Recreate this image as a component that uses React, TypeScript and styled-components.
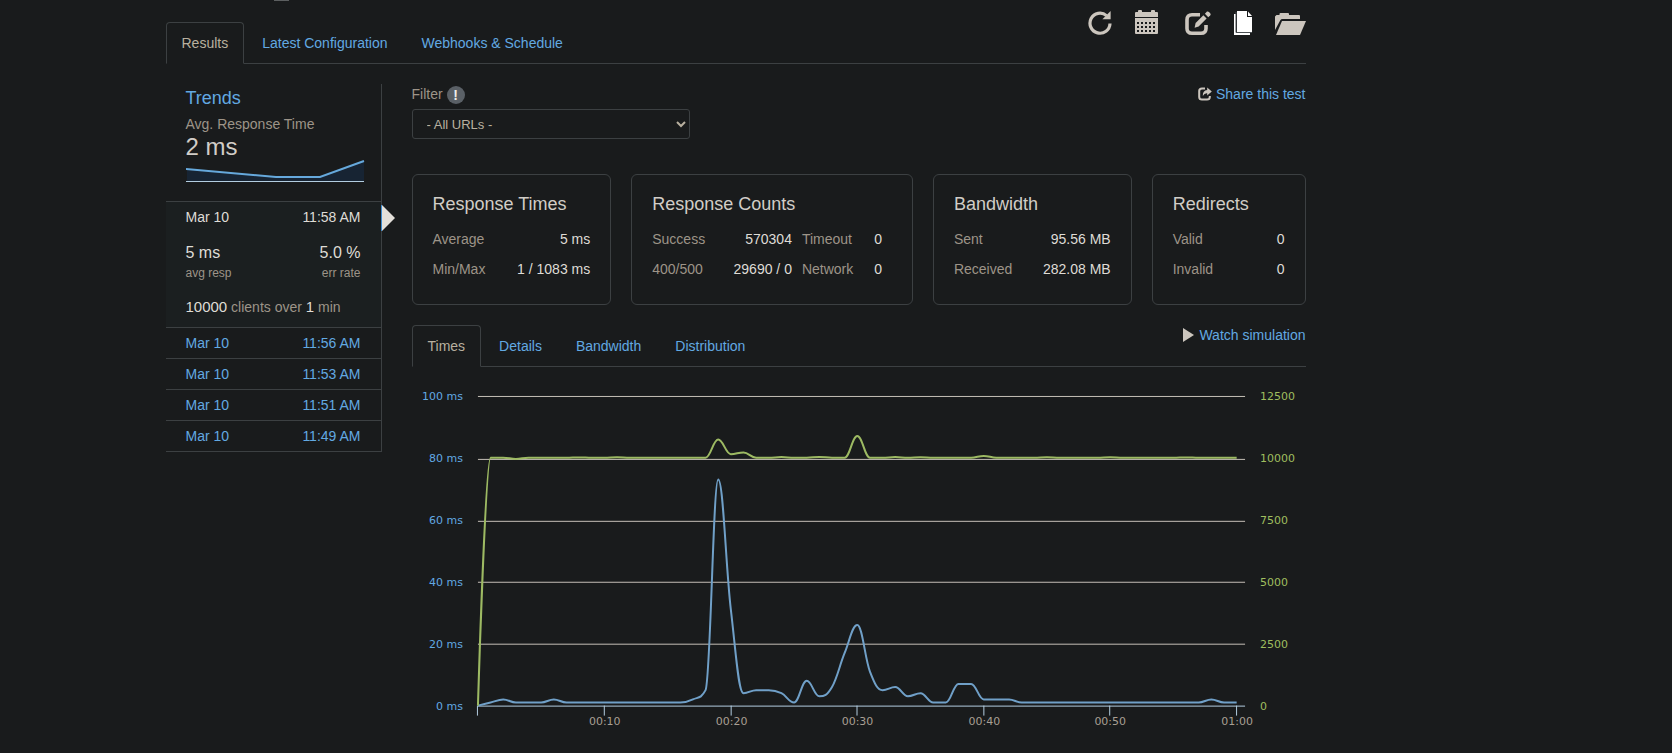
import React from "react";
import styled, { createGlobalStyle, css } from "styled-components";

const color = {
  page: "#191b1c",
  line: "#3c4042",
  text: "#d1cdc7",
  strong: "#dfdcd6",
  muted: "#9d9488",
  link: "#62a9e2",
  icon: "#ccc6be",
};

const GlobalStyle = createGlobalStyle`
  *, *::before, *::after { box-sizing: border-box; }
  body {
    margin: 0;
    background: ${color.page};
    color: ${color.text};
    font: 14px/20px "Liberation Sans", Arial, sans-serif;
  }
  h2, h3, p, ul, dl, dd { margin: 0; padding: 0; font-weight: 400; }
  ul { list-style: none; }
  a { color: ${color.link}; text-decoration: none; }
  button { font: inherit; }
`;

const Page = styled.div`
  padding-right: 201px;
`;

const Container = styled.div`
  max-width: 1170px;
  margin: 0 auto;
  padding: 0 15px;
`;

const HeadingRule = styled.div`
  width: 15px;
  height: 1px;
  margin-left: 108px;
  background: #5c5f60;
`;

const Header = styled.header`
  display: flex;
  justify-content: space-between;
  align-items: flex-start;
  padding-top: 9px;
  border-bottom: 1px solid ${color.line};
`;

const TabList = styled.nav`
  display: flex;
  gap: 2px;
  margin-bottom: -1px;
`;

const HeaderTabs = styled(TabList)`
  margin-top: 12px;
`;

const Tab = styled.a<{ $active?: boolean }>`
  padding: 10px 15px;
  border: 1px solid transparent;
  border-radius: 4px 4px 0 0;
  ${({ $active }) =>
    $active &&
    css`
      color: #b8b09f;
      background: ${color.page};
      border-color: ${color.line};
      border-bottom-color: ${color.page};
    `}
`;

const Toolbar = styled.div`
  display: flex;
  gap: 22px;
`;

const ToolButton = styled.button<{ $bright?: boolean }>`
  display: block;
  padding: 0;
  border: 0;
  background: none;
  color: ${({ $bright }) => ($bright ? "#ffffff" : color.icon)};
  cursor: pointer;
  svg { display: block; }
`;

const Columns = styled.div`
  display: flex;
  align-items: flex-start;
  gap: 30px;
  padding-top: 20px;
`;

const Sidebar = styled.aside`
  flex: 0 0 215px;
  border-right: 1px solid ${color.line};
`;

const Trends = styled.section`
  padding: 4px 16px 18px 20px;
  svg { display: block; }
`;

const TrendsTitle = styled.h2`
  font-size: 18px;
`;

const TrendLabel = styled.p`
  margin-top: 6px;
  color: ${color.muted};
`;

const TrendValue = styled.p`
  margin-top: 1px;
  font-size: 24px;
  line-height: 24px;
`;

const RunItem = styled.li`
  border-top: 1px solid ${color.line};
  &:last-child { border-bottom: 1px solid ${color.line}; }
`;

const RunLink = styled.a`
  display: flex;
  justify-content: space-between;
  padding: 5px 20px;
`;

const CurrentRun = styled(RunItem)`
  position: relative;
  padding: 5px 20px 10px;
  background: #1b1f20;
  color: ${color.strong};
`;

const Pointer = styled.svg`
  position: absolute;
  left: 100%;
  top: 2px;
`;

const Split = styled.div`
  display: flex;
  justify-content: space-between;
`;

const RunFigures = styled(Split)`
  margin: 16px 0 14px;
  font-size: 16px;
`;

const Figure = styled.div<{ $right?: boolean }>`
  text-align: ${({ $right }) => ($right ? "right" : "left")};
`;

const Caption = styled.div`
  font-size: 12px;
  color: ${color.muted};
`;

const RunClients = styled.p`
  color: ${color.muted};
  strong {
    font-size: 15px;
    font-weight: 400;
    color: ${color.strong};
  }
`;

const Main = styled.main`
  flex: 1;
  min-width: 0;
`;

const FilterRow = styled.div`
  display: flex;
  justify-content: space-between;
  align-items: flex-start;
`;

const FilterLabel = styled.label`
  display: flex;
  align-items: center;
  gap: 4px;
  margin-bottom: 5px;
  color: ${color.muted};
`;

const Hint = styled.span`
  width: 18px;
  height: 18px;
  margin-top: 2px;
  border-radius: 50%;
  background: #5a6066;
  color: #f0eee9;
  font-size: 14px;
  font-weight: 700;
  line-height: 18px;
  text-align: center;
`;

const Select = styled.select`
  display: block;
  width: 278px;
  height: 30px;
  padding: 5px 0 5px 10px;
  border: 1px solid ${color.line};
  border-radius: 3px;
  background: ${color.page};
  color: #b8b09f;
  font: 13px "Liberation Sans", Arial, sans-serif;
`;

const IconLink = styled.a`
  display: flex;
  align-items: center;
  gap: 4px;
  svg { color: ${color.icon}; }
`;

const Cards = styled.div`
  display: grid;
  grid-template-columns: 200fr 282fr 199fr 154fr;
  gap: 20px;
  margin: 35px 0 20px;
`;

const Card = styled.section`
  padding: 19px 20px 20px;
  border: 1px solid ${color.line};
  border-radius: 6px;
`;

const CardTitle = styled.h3`
  margin-bottom: 10px;
  font-size: 18px;
`;

const Stats = styled.table<{ $inset?: boolean }>`
  width: ${({ $inset }) => ($inset ? "calc(100% - 10px)" : "100%")};
  border-collapse: collapse;
`;

const StatLabel = styled.th`
  padding: 5px 0;
  color: ${color.muted};
  font-weight: 400;
  text-align: left;
  td + & {
    width: 70px;
    padding-left: 10px;
  }
`;

const StatValue = styled.td`
  padding: 5px 0;
  color: ${color.strong};
  text-align: right;
  td ~ & { width: 20px; }
`;

const ChartHeader = styled.div`
  display: flex;
  justify-content: space-between;
  align-items: flex-start;
  border-bottom: 1px solid ${color.line};
`;

const Chart = styled.svg`
  display: block;
  width: 100%;
  height: auto;
  font: 11px "DejaVu Sans", Verdana, sans-serif;
`;

type Point = [number, number];

/* Smooth curve whose control points never overshoot the neighbouring samples. */
function spline(points: Point[]): string {
  let d = `M${points[0][0]} ${points[0][1]}`;
  let out: Point = points[0];
  for (let i = 1; i < points.length; i++) {
    const [x, y] = points[i];
    const prev = points[i - 1];
    const next = points[i + 1];
    let left: Point = [x, y];
    let right: Point = [x, y];
    if (next) {
      const lx = (1.5 * x + prev[0]) / 2.5;
      let ly = (1.5 * y + prev[1]) / 2.5;
      const rx = (1.5 * x + next[0]) / 2.5;
      let ry = (1.5 * y + next[1]) / 2.5;
      const shift = ((ry - ly) * (rx - x)) / (rx - lx) + y - ry;
      ly += shift;
      ry += shift;
      if (ly > prev[1] && ly > y) {
        ly = Math.max(prev[1], y);
        ry = 2 * y - ly;
      } else if (ly < prev[1] && ly < y) {
        ly = Math.min(prev[1], y);
        ry = 2 * y - ly;
      }
      if (ry > next[1] && ry > y) {
        ry = Math.max(next[1], y);
        ly = 2 * y - ry;
      } else if (ry < next[1] && ry < y) {
        ry = Math.min(next[1], y);
        ly = 2 * y - ry;
      }
      left = [lx, ly];
      right = [rx, ry];
    }
    d += `C${out[0]} ${out[1]} ${left[0]} ${left[1]} ${x} ${y}`;
    out = right;
  }
  return d;
}

const responseMs = [
  0, 1, 2, 1, 1, 1, 2, 1, 1, 1, 1, 1, 1, 1, 1, 1, 1, 2, 5, 73, 31, 4, 5, 5, 4, 1, 8, 3, 6, 17,
  26, 11, 5, 6, 3, 4, 1, 1, 7, 7, 2, 2, 2, 1, 1, 1, 1, 1, 1, 1, 1, 1, 1, 1, 1, 1, 1, 1, 2, 1, 1,
];

const clientSamples: Record<number, number> = {
  0: 0, 3: 9960, 8: 10020, 11: 10030, 19: 10740, 20: 10150, 21: 10220, 24: 10035, 27: 10040,
  30: 10880, 33: 10035, 35: 10025, 40: 10080, 45: 10025, 50: 10025, 56: 10020,
};
const clients = responseMs.map((_, t) => clientSamples[t] ?? 10005);

const BASE = 339;
const HEIGHT = 310;
const plotX = (t: number) => 66 + (t * 1266) / 100;
const bluePath = spline(responseMs.map((v, t): Point => [plotX(t), BASE - (v / 100) * HEIGHT]));
const greenPath = spline(clients.map((v, t): Point => [plotX(t), BASE - (v / 12500) * HEIGHT]));

const gridRows = [
  { y: 29, text: 33, ms: "100 ms", count: "12500" },
  { y: 92, text: 95, ms: "80 ms", count: "10000" },
  { y: 154, text: 157, ms: "60 ms", count: "7500" },
  { y: 215, text: 219, ms: "40 ms", count: "5000" },
  { y: 277, text: 281, ms: "20 ms", count: "2500" },
  { y: 339, text: 343, ms: "0 ms", count: "0" },
];

const timeTicks = [
  { x: 65, label: "" },
  { x: 192, label: "00:10" },
  { x: 319, label: "00:20" },
  { x: 445, label: "00:30" },
  { x: 572, label: "00:40" },
  { x: 698, label: "00:50" },
  { x: 825, label: "01:00" },
];

function TimesChart() {
  return (
    <Chart viewBox="0 0 895 380" role="img" aria-label="Response times and clients over one minute">
      {gridRows.map((row) => (
        <g key={row.ms}>
          <rect x="66" y={row.y} width="768" height="1" fill={row.y === BASE ? "#b3cde0" : "#c5bfb6"} />
          <text x="51" y={row.text} textAnchor="end" fill={color.link}>{row.ms}</text>
          <text x="849" y={row.text} fill="#9fbe5f">{row.count}</text>
        </g>
      ))}
      {timeTicks.map((tick) => (
        <g key={tick.x}>
          <rect x={tick.x} y={BASE} width="1" height="10" fill="#b3cde0" />
          <text x={tick.x + 1} y="358" textAnchor="middle" fill="#a89f93">{tick.label}</text>
        </g>
      ))}
      <path d={bluePath} fill="none" stroke="#70a0c8" strokeWidth="2" strokeLinejoin="round" />
      <path d={greenPath} fill="none" stroke="#9dba63" strokeWidth="2" strokeLinejoin="round" />
    </Chart>
  );
}

function Sparkline() {
  return (
    <svg width="179" height="24" viewBox="0 0 179 24" aria-hidden="true">
      <path d="M1 10 90 18H134L178 2V22H1Z" fill="#172433" />
      <path d="M0 10 90 18H134L178 2" fill="none" stroke="#66a9dc" strokeWidth="2" />
      <rect x="0" y="22" width="178" height="1" fill="#b3cde0" />
    </svg>
  );
}

function RepeatIcon() {
  return (
    <svg width="24" height="26" viewBox="0 0 24 26" aria-hidden="true">
      <path d="M18.5 5.6A10 10 0 1 0 22 13.5" fill="none" stroke="currentColor" strokeWidth="3.2" />
      <path d="M22.6 1V9.2H14.4Z" fill="currentColor" />
    </svg>
  );
}

function CalendarIcon() {
  const rows = [12, 16, 20];
  const cols = [4, 8, 12, 16, 20];
  return (
    <svg width="26" height="26" viewBox="0 0 26 26" fill="currentColor" aria-hidden="true">
      <path d="M1 7V3Q1 2 2 2H4V1Q4 0 5 0H7Q8 0 8 1V2H17V1Q17 0 18 0H20Q21 0 21 1V2H23Q24 2 24 3V7Z" />
      <path d="M1 8H24V23Q24 24 23 24H2Q1 24 1 23Z" />
      {rows.map((y) => cols.map((x) => <rect key={`${x}-${y}`} x={x - 1} y={y} width="2" height="2" fill={color.page} />))}
    </svg>
  );
}

function EditIcon() {
  return (
    <svg width="30" height="26" viewBox="0 0 30 26" aria-hidden="true">
      <path d="M18 4.7H10Q5 4.7 5 9.7V18.5Q5 23.3 10 23.3H19Q24 23.3 24 18.5V15" fill="none" stroke="currentColor" strokeWidth="3.6" />
      <path d="M21.4 5.2 24.6 8.4 16.6 16.4 12.6 17.8 13.6 13Z" fill="currentColor" />
      <path d="M25 1.6Q26 1 27 2L28.4 3.4Q29 4.4 28.3 5.2L26.3 7.2 22.9 3.8Z" fill="currentColor" />
    </svg>
  );
}

function CopyIcon() {
  return (
    <svg width="19" height="26" viewBox="0 0 19 26" aria-hidden="true">
      <path d="M0 4H2V23H16V25H0Z" fill="currentColor" />
      <path d="M3 1H13V7H18V22H3Z" fill="currentColor" />
      <path d="M14 1.5V6H18Z" fill="currentColor" />
      <path d="M2 2V22.5H18" fill="none" stroke="#4a4f52" strokeWidth="1" />
    </svg>
  );
}

function FolderIcon() {
  return (
    <svg width="31" height="26" viewBox="0 0 31 26" fill="currentColor" aria-hidden="true">
      <path d="M0 6.5 1.5 5H4.5V4Q4.5 3 5.5 3H13Q14 3 14 4V5H24Q25 5 25 6V9H7.5Q6 9 5.3 10.3L0 20Z" />
      <path d="M7 11H31L25 25H1Z" />
    </svg>
  );
}

function ShareIcon() {
  return (
    <svg width="14" height="14" viewBox="0 0 14 14" aria-hidden="true">
      <path d="M7 1.5H4Q1.2 1.5 1.2 4V10Q1.2 12.6 4 12.6H9Q11.8 12.6 11.8 10V9" fill="none" stroke="currentColor" strokeWidth="2" />
      <path d="M9.2.5 13.8 4.6 9.2 8.6V6.3Q6.4 6 4.8 9 4.6 3.4 9.2 2.9Z" fill="currentColor" />
    </svg>
  );
}

function PlayIcon() {
  return (
    <svg width="12" height="14" viewBox="0 0 12 14" aria-hidden="true">
      <path d="M0 0 11 7 0 14Z" fill="currentColor" />
    </svg>
  );
}

const tools = [
  { label: "Run again", icon: <RepeatIcon /> },
  { label: "Schedule", icon: <CalendarIcon /> },
  { label: "Edit", icon: <EditIcon /> },
  { label: "Copy", icon: <CopyIcon />, bright: true },
  { label: "Move to folder", icon: <FolderIcon /> },
];

const olderRuns = ["11:56 AM", "11:53 AM", "11:51 AM", "11:49 AM"];

const cards: { title: string; rows: string[][]; inset?: boolean }[] = [
  { title: "Response Times", rows: [["Average", "5 ms"], ["Min/Max", "1 / 1083 ms"]] },
  {
    title: "Response Counts",
    rows: [["Success", "570304", "Timeout", "0"], ["400/500", "29690 / 0", "Network", "0"]],
    inset: true,
  },
  { title: "Bandwidth", rows: [["Sent", "95.56 MB"], ["Received", "282.08 MB"]] },
  { title: "Redirects", rows: [["Valid", "0"], ["Invalid", "0"]] },
];

export default function App() {
  return (
    <Page>
      <GlobalStyle />
      <Container>
        <HeadingRule />
        <Header>
          <HeaderTabs aria-label="Test">
            <Tab href="#results" $active>Results</Tab>
            <Tab href="#configuration">Latest Configuration</Tab>
            <Tab href="#webhooks">Webhooks &amp; Schedule</Tab>
          </HeaderTabs>
          <Toolbar>
            {tools.map((tool) => (
              <ToolButton key={tool.label} type="button" aria-label={tool.label} $bright={tool.bright}>
                {tool.icon}
              </ToolButton>
            ))}
          </Toolbar>
        </Header>

        <Columns>
          <Sidebar>
            <Trends>
              <TrendsTitle><a href="#trends">Trends</a></TrendsTitle>
              <TrendLabel>Avg. Response Time</TrendLabel>
              <TrendValue>2 ms</TrendValue>
              <Sparkline />
            </Trends>
            <ul>
              <CurrentRun>
                <Pointer width="14" height="28" viewBox="0 0 14 28" aria-hidden="true">
                  <path d="M1 1 14 14 1 27Z" fill="#e3e0da" />
                  <rect x="0" y="1" width="1" height="26" fill="#3b8bd0" />
                </Pointer>
                <Split>
                  <span>Mar 10</span>
                  <span>11:58 AM</span>
                </Split>
                <RunFigures>
                  <Figure>5 ms<Caption>avg resp</Caption></Figure>
                  <Figure $right>5.0 %<Caption>err rate</Caption></Figure>
                </RunFigures>
                <RunClients>
                  <strong>10000</strong> clients over <strong>1</strong> min
                </RunClients>
              </CurrentRun>
              {olderRuns.map((time) => (
                <RunItem key={time}>
                  <RunLink href="#run">
                    <span>Mar 10</span>
                    <span>{time}</span>
                  </RunLink>
                </RunItem>
              ))}
            </ul>
          </Sidebar>

          <Main>
            <FilterRow>
              <div>
                <FilterLabel htmlFor="url-filter">
                  Filter <Hint>!</Hint>
                </FilterLabel>
                <Select id="url-filter" defaultValue="all">
                  <option value="all">- All URLs -</option>
                </Select>
              </div>
              <IconLink href="#share"><ShareIcon />Share this test</IconLink>
            </FilterRow>

            <Cards>
              {cards.map((card) => (
                <Card key={card.title}>
                  <CardTitle>{card.title}</CardTitle>
                  <Stats $inset={card.inset}>
                    <tbody>
                      {card.rows.map((cells) => (
                        <tr key={cells[0]}>
                          {cells.map((cell, i) =>
                            i % 2 === 0 ? (
                              <StatLabel key={i} scope="row">{cell}</StatLabel>
                            ) : (
                              <StatValue key={i}>{cell}</StatValue>
                            )
                          )}
                        </tr>
                      ))}
                    </tbody>
                  </Stats>
                </Card>
              ))}
            </Cards>

            <ChartHeader>
              <TabList aria-label="Charts">
                <Tab href="#times" $active>Times</Tab>
                <Tab href="#details">Details</Tab>
                <Tab href="#bandwidth">Bandwidth</Tab>
                <Tab href="#distribution">Distribution</Tab>
              </TabList>
              <IconLink href="#simulation"><PlayIcon />Watch simulation</IconLink>
            </ChartHeader>
            <TimesChart />
          </Main>
        </Columns>
      </Container>
    </Page>
  );
}
